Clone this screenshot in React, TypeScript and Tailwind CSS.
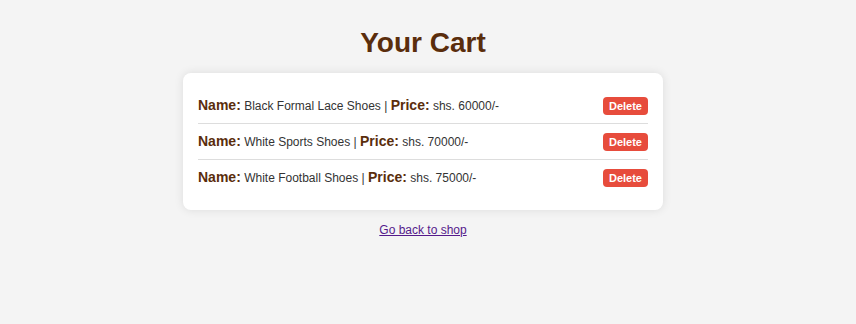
const items = [
  { name: "Black Formal Lace Shoes", price: "shs. 60000/-" },
  { name: "White Sports Shoes", price: "shs. 70000/-" },
  { name: "White Football Shoes", price: "shs. 75000/-" },
];

export default function App() {
  return (
    <div className="min-h-[324px] bg-[#f4f4f4] pt-[27px] pr-[10px] font-['Liberation_Sans',Arial,sans-serif] text-[#333]">
      <h1 className="text-center text-[28px] leading-[32px] font-bold text-[#5a2d0c] mb-[14px]">Your Cart</h1>

      <div className="mx-auto w-[480px] bg-white rounded-lg shadow-[0_0_10px_rgba(0,0,0,0.1)] p-[15px]">
        {items.map((item, i) => (
          <div
            key={item.name}
            className={
              "flex items-center justify-between py-[8px] " +
              (i < items.length - 1 ? "border-b border-[#ddd]" : "")
            }
          >
            <p className="text-[12px] leading-[18px]">
              <strong className="text-[14px] text-[#5a2d0c]">Name:</strong> {item.name} |{" "}
              <strong className="text-[14px] text-[#5a2d0c]">Price:</strong> {item.price}
            </p>
            <button className="bg-[#e74c3c] text-white text-[11px] font-bold leading-[18px] px-[6px] rounded-[4px]">
              Delete
            </button>
          </div>
        ))}
      </div>

      <div className="text-center mt-[7px]">
        <a href="#" className="text-[12px] text-[#551a8b] underline">Go back to shop</a>
      </div>
    </div>
  );
}
